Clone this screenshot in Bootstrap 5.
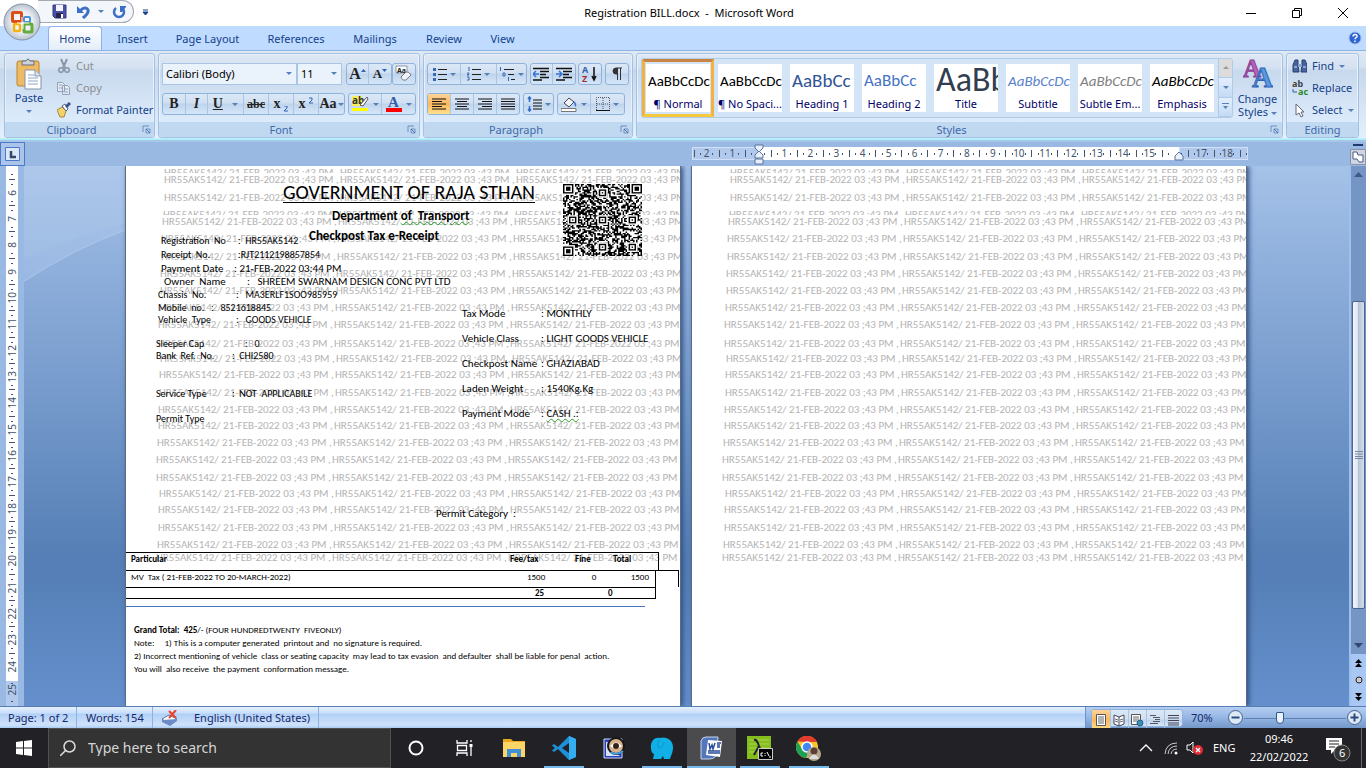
<!DOCTYPE html>
<html lang="en">
<head>
<meta charset="utf-8">
<meta name="viewport" content="width=device-width, initial-scale=1">
<title>Registration BILL.docx - Microsoft Word</title>
<link href="https://cdn.jsdelivr.net/npm/bootstrap@5.3.0/dist/css/bootstrap.min.css" rel="stylesheet">
<script src="https://cdn.jsdelivr.net/npm/bootstrap@5.3.0/dist/js/bootstrap.bundle.min.js"></script>
<style>
body{font:11px/16px "Noto Sans","Open Sans",sans-serif;color:#15428b;background:#bfdbff;overflow:hidden}
button,input,select{font:inherit;color:inherit}
button{background:none;border:0;padding:0}
svg{display:block;flex:none}
a{color:inherit;text-decoration:none}
.titlebar{height:26px;background:#fff;color:#000;position:relative}
.office{position:absolute;left:3px;top:3px;z-index:3}
.qat{margin-left:38px;height:23px;width:96px;border:1px solid #a5a9b0;border-left:0;border-radius:0 12px 12px 0;background:#f3f6fa;padding-left:14px}
.caption{width:46px;height:26px}
.tabs{height:24px;padding-left:48px;background:#bfdbff}
.tabs a{height:24px;padding:5px 0 0;text-align:center}
.tabs .on{background:linear-gradient(#fff,#e4edf8);border:1px solid #8db2e3;border-bottom:0;border-radius:4px 4px 0 0;padding-top:4px}
.ribbon{height:90px;padding:2px 7px 2px 4px;background:linear-gradient(#dfe9f5 0,#d3e1f1 17px,#c7d8ec 18px,#e3effc 87px,#a5f0f7 88px);border-top:1px solid #8db2e3;gap:3px}
.grp{height:85px;border:1px solid #a3c1e2;border-radius:3px;box-shadow:inset 0 0 0 1px #e8f1fb;background:linear-gradient(#dee8f5 0,#d3e0f0 15px,#c8d9ed 16px,#dcebfb 67px);position:relative}
.grp .body{height:68px}
.grp .cap{height:15px;background:#c1d8f1;color:#3e6aaa;text-align:center;line-height:15px;border-radius:0 0 3px 3px;position:relative}
.launch{position:absolute;right:3px;top:3px}
.w-clip{width:151px}.w-font{width:262px}.w-par{width:210px}.w-edit{width:73px}
.caret{display:inline-block;border:3px solid transparent;border-top-color:#5580b8;border-bottom:0;width:0;height:0}
.bset{height:22px;border:1px solid #90b3dc;border-radius:3px;background:linear-gradient(#dbe8f7 0,#d0e0f2 9px,#bfd4ec 10px,#d5e6f8)}
.bset button{height:20px;display:flex;align-items:center;justify-content:center;gap:3px;border-right:1px solid #aac5e4}
.bset button:last-child{border-right:0}
.bset .on{background:linear-gradient(#fdd39a,#f9b85f 50%,#ffe08a)}
.k22{width:22px}.k23{width:23px}.k24{width:24px}.k25{width:25px}.k29{width:29px}.k33{width:33px}.k36{width:36px}
.serif{font-family:"Liberation Serif",serif;color:#222}
.combo{height:22px;border:1px solid #abc4e2;background:#eaf2fb;color:#000;appearance:none;padding:0 3px}
.c-name{width:135px}.c-size{width:45px}
.combo-box{position:relative}.combo-box .caret{position:absolute;right:5px;top:9px;pointer-events:none}
.small-cmd{height:22px;display:flex;align-items:center;gap:5px;white-space:nowrap}
.dim{color:#8d8d8d}
.gallery{height:60px;border:1px solid #b0cbe8;background:#d3e4f7;border-radius:3px;overflow:hidden}
.tile{width:72px;height:58px;padding:4px 3px;border:1px solid transparent;color:#00006c}
.tile>span{display:block;background:#fff;overflow:hidden;white-space:nowrap;width:64px}
.tile .smp{height:32px;line-height:34px;font-size:15px;font-family:Carlito,Lato,sans-serif;text-align:left;padding-left:2px;color:#000}
.tile .nm{height:16px;text-align:center}
.tile.on{border:3px solid #efa43c;border-color:#c98443 #f5b13d #f7c93c;padding:2px 1px}
.tile .hd{font-size:19px;color:#2f5496}.tile .hd2{font-size:17px;color:#4472c4}
.tile .tt{font-size:34px;line-height:32px;color:#323e4f;font-weight:300}
.gscroll{width:14px;border-left:1px solid #b0cbe8}
.gscroll button{flex:1;width:13px;display:flex;align-items:center;justify-content:center;border-bottom:1px solid #b0cbe8;background:linear-gradient(#e3effd,#c4daf4)}
.rulerbar{height:26px;background:#9ab9e2;border-top:2px solid #a9c5ea}
.tabsel{width:25px;height:24px;border:1px solid #4b78ca;background:#abc4e9}
.hruler{height:13px;margin-top:5px;color:#44546a;font-size:10px;width:556px;margin-right:1px}
.rl-out{background:#b0c9ed;box-shadow:inset 0 0 0 1px #cfe0f8;flex:none;overflow:hidden}
.rl-in{background:#fff;flex:1 1 0;min-width:0;padding-left:3px}
.unit{flex:1 1 0;min-width:0;display:grid;grid-template-columns:repeat(4,minmax(0,1fr));align-items:center;justify-items:center;line-height:13px}
.rl-out .unit{flex:none;width:26px}
.rl-out .unit.short{width:18px;grid-template-columns:repeat(3,minmax(0,1fr))}
.unit i{background:#44546a;width:1px;height:2px}.unit i.bar{height:7px}
.unit b{font-weight:400;justify-self:center}
.edge-l{width:67px}.edge-r{width:69px}
.work{min-height:0;background:linear-gradient(#a5c2e8 0,#91b1dd 90px,#7398ca 240px,#557fb6 390px,#557fb6 410px,#6590cd 540px)}
.vruler{width:24px;background:#9ab9e2;padding-left:6px}
.vscale{width:12px;background:#fff;color:#44546a;font-size:10px;overflow:hidden;height:515px;padding-top:6px}
.vend{background:#b0c9ed;width:12px;color:#44546a;height:25px;font-size:10px}
.vunit{height:26px;display:grid;grid-template-rows:4px 5px 5px 12px;justify-items:center;align-items:center}
.vunit.long{height:27px;grid-template-rows:5px 5px 5px 12px}
.vunit i{background:#44546a;height:1px;width:2px}.vunit i.bar{width:6px}
.vunit b{font-weight:400;writing-mode:vertical-rl;transform:rotate(180deg);line-height:12px}
.desk{padding-right:1px;gap:10px;position:relative;overflow:hidden}
.swoosh{position:absolute;left:0;top:0}
.paper{width:556px;background:#fff;border:solid #5b6b85;border-width:0 1px;display:grid;grid-template:minmax(0,1fr)/minmax(0,1fr);box-shadow:2px 0 5px #2f5184;position:relative;overflow:hidden}
.layer{grid-area:1/1;min-width:0;font-family:Carlito,Lato,sans-serif;color:#000}
.wm{color:#b4b4b4;font-size:11px;overflow:hidden}
.wm .ln{display:flex;overflow:hidden;line-height:14px;white-space:nowrap}
.wm .ln span{flex:0 0 176px}
.head{padding:13px 0 0 157px;line-height:20px}
.head h1{font-size:20px;line-height:27px;text-decoration:underline;text-underline-offset:3px;text-decoration-thickness:1px;font-weight:400;margin:0;white-space:nowrap}
.head h2{font-size:13px;line-height:20px;margin:0;font-weight:700}
.wavy{text-decoration:underline wavy #2a9a2a 1px}
.flds{white-space:pre}
.flds .fl{display:flex}
.s9{font-size:10px}.s10{font-size:11px}
.left-f{padding:68px 0 0}.right-f{padding:135px 0 0 336px;font-size:11px;line-height:25px}
.right-f .lb{width:79px}
.qrbox{justify-self:end;padding:18px 38px 0 0}
.bill{padding-top:386px;font-size:9px;line-height:12px}
.bill table{width:553px;table-layout:fixed;border-spacing:0;border-collapse:separate}
.bill td,.bill th{padding:0;vertical-align:top}
.tl{border-top:1px solid #000}.rl{border-right:1px solid #000}.bl{border-bottom:1px solid #000}
.r1{height:18px}.r2{height:17px}.r3{height:12px;line-height:10px}
.blue{height:1px;width:519px;background:#4472c4;margin-top:7px}
.notes{padding:16px 0 0 8px;line-height:13px;white-space:pre}
.scr{width:17px;background:#7596c5;border-left:2px solid #9ec0ec}
.scr button{display:flex;align-items:center;justify-content:center}
.thumb{height:308px;margin:0 1px;border:1px solid #4f6294;border-radius:2px;background:linear-gradient(90deg,#f3f6f9,#dfe7ef 40%,#b4c4d8 50%,#d5dfec);display:flex;align-items:center;justify-content:center}
.status{height:22px;border-top:1px solid #567db1;background:linear-gradient(#e5f0fd 0,#c9dffa 6px,#b1d0f6 7px,#cfe2fb 18px,#a9cbf2);color:#15286b}
.status .it{border-right:1px solid #8eb2e0;display:flex;align-items:center;height:21px;white-space:nowrap}
.zone{background:linear-gradient(#b5cef2,#8fb1e0 60%,#7397c9);border-left:1px solid #6d93c8;width:281px}
.zoomr{appearance:none;width:102px;height:16px;background:linear-gradient(#5f81b4,#5f81b4) 0 8px/100% 1px no-repeat;margin:0}
.zoomr::-webkit-slider-thumb{appearance:none;width:8px;height:12px;background:#e9f1fb;border:1px solid #31578d;border-radius:1px 1px 4px 4px}
.task{height:40px;background:#212126;color:#fff}
.search{width:343px;height:40px;background:#333;border:1px solid #515151;color:#d6d6d6;font-size:14px;padding-left:11px;gap:12px}
.search input{background:none;border:0;outline:0;padding:0;width:220px}
.search input::placeholder{color:#d6d6d6;opacity:1}
.app{width:49px;height:40px;display:flex;align-items:center;justify-content:center}
.run{box-shadow:inset 0 -2px #76b9ed;width:40px;margin:0 5px 0 4px}
.app.act{background:#4b4b4d;box-shadow:inset 0 -2px #76b9ed}
</style>
</head>
<body class="vh-100 d-flex flex-column">
<header class="titlebar d-flex">
 <button class="office" aria-label="Office Button"><svg width="40" height="40"><defs><radialGradient id="og"><stop offset="0" stop-color="#fff"/><stop offset=".6" stop-color="#e9edf2"/><stop offset="1" stop-color="#b9c2cf"/></radialGradient></defs><circle cx="19" cy="19" r="18" fill="url(#og)" stroke="#8392a8"/><g fill="none" stroke-width="3"><rect x="9.500" y="9.500" width="9" height="9" rx="1" stroke="#dd4d15"/><rect x="21" y="14" width="6" height="5" rx="1" stroke="#4c93d8" stroke-width="2"/><rect x="11" y="21" width="6" height="7" rx="1" stroke="#f4b212" stroke-width="2.500"/><rect x="21" y="21" width="8" height="8" rx="1" stroke="#62ab3c"/></g><path d="M14 20h5v-6M20 20v6M19 20h7" stroke="#fff" fill="none"/></svg></button>
 <div class="qat d-flex align-items-center gap-2">
  <button aria-label="Save"><svg width="16" height="16"><path d="M1 1h13v13H3l-2-2z" fill="#4b4fa6" stroke="#373a80"/><path d="M4 1h7v6H4z" fill="#f4f4ff"/><path d="M4 9h7v5H4z" fill="#25264e"/><path d="M9 10h2v4H9z" fill="#fff"/></svg></button>
  <button class="d-flex align-items-center gap-2" aria-label="Undo"><svg width="14" height="14"><path d="M1 1v7h7z" fill="#3b6fc9"/><path d="M4 6c4-5 9-3 8 1-1 3-3 4-5 6" fill="none" stroke="#3b6fc9" stroke-width="3"/></svg><i class="caret"></i></button>
  <button aria-label="Redo"><svg width="14" height="14"><path d="M4 3a5 5 0 1 0 6 0" fill="none" stroke="#3b6fc9" stroke-width="2.500"/><path d="M8 1h6v1l-4 5H8z" fill="#3b6fc9"/></svg></button>
 </div>
 <button class="ms-1 ps-1" aria-label="Customize"><svg width="8" height="8"><path d="M1 1h5M1 3h5l-2.500 3z" stroke="#15428b" fill="#15428b"/></svg></button>
 <div class="flex-fill d-flex justify-content-center align-items-center"><span>Registration BILL.docx&nbsp; -&nbsp; Microsoft Word</span></div>
 <button class="caption d-flex align-items-center justify-content-center" aria-label="Minimize"><svg width="12" height="12"><path d="M1 6.500h10" stroke="#000"/></svg></button>
 <button class="caption d-flex align-items-center justify-content-center" aria-label="Restore"><svg width="12" height="12"><path d="M1.500 3.500h7v7h-7zM3.500 3V1.500h7v7H9" fill="none" stroke="#000"/></svg></button>
 <button class="caption d-flex align-items-center justify-content-center" aria-label="Close"><svg width="12" height="12"><path d="M1 1l10 10M11 1L1 11" stroke="#000"/></svg></button>
</header>
<nav class="tabs d-flex">
 <a href="#" class="on" style="width:54px">Home</a><a href="#" style="width:61px">Insert</a><a href="#" style="width:89px">Page Layout</a><a href="#" style="width:88px">References</a><a href="#" style="width:70px">Mailings</a><a href="#" style="width:68px">Review</a><a href="#" style="width:49px">View</a>
 <button class="ms-auto me-1" aria-label="Help"><svg width="14" height="14"><circle cx="7" cy="7" r="6" fill="#2e65d0" stroke="#9cb8ea"/><path d="M5 5.500c0-3 4.500-2.500 4 0-.3 1-2 1.200-2 2.700M7 9.500V11" stroke="#fff" stroke-width="1.500" fill="none"/></svg></button>
</nav>
<section class="ribbon d-flex">
 <div class="grp w-clip"><div class="body d-flex pt-1">
  <button class="d-flex flex-column align-items-center" style="width:48px"><svg width="28" height="32"><rect x="2" y="3" width="22" height="25" rx="2" fill="#eebb62" stroke="#b98534"/><path d="M7 3h4q2-4 4 0h4v4H7z" fill="#ccd2dc" stroke="#666d7b"/><path d="M10 12h10l6 6v13H10z" fill="#fff" stroke="#8291ad"/><path d="M13 17h6M13 20h10M13 23h10M13 26h10" stroke="#8ea4ca"/><path d="M20 12v6h6" fill="#dde5f2" stroke="#8291ad"/></svg><span>Paste</span><i class="caret mt-1"></i></button>
  <div class="ps-1" style="margin-top:-3px">
   <button class="small-cmd dim"><svg width="14" height="16"><path d="M4 1l4 9M10 1L6 10" stroke="#8a95a8" stroke-width="2"/><circle cx="4" cy="12" r="2.300" fill="none" stroke="#8a95a8" stroke-width="1.500"/><circle cx="10" cy="12" r="2.300" fill="none" stroke="#8a95a8" stroke-width="1.500"/></svg>Cut</button>
   <button class="small-cmd dim"><svg width="14" height="16"><path d="M.5 2.500h5l2 2v7h-7zM5.500 5.500h5l2 2v7h-7z" fill="#e4eaf3" stroke="#94a3bb"/><path d="M7 9h4M7 12h4M2 5h3M2 8h3" stroke="#94a3bb"/></svg>Copy</button>
   <button class="small-cmd"><svg width="14" height="16"><path d="M0 8l5-3 4 4-2 6-4 0z" fill="#f3d26b" stroke="#a8883c"/><path d="M5 4l4 5 2-2-3-5z" fill="#fff" stroke="#50648c"/><path d="M9 5l4-4" stroke="#3d4f8a" stroke-width="3"/></svg>Format Painter</button>
  </div></div><div class="cap pe-3">Clipboard<svg class="launch" width="9" height="9"><path d="M1 7V1h6M4 4h4v4H4z" fill="none" stroke="#6a8fc0"/><path d="M4 4l4 4" stroke="#5075a8"/></svg></div></div>
 <div class="grp w-font"><div class="body d-flex flex-column justify-content-between" style="padding:9px 3px 7px">
  <div class="d-flex">
   <div class="combo-box d-flex"><select class="combo c-name" aria-label="Font"><option>Calibri (Body)</option></select><i class="caret"></i></div>
   <div class="combo-box d-flex"><select class="combo c-size" aria-label="Size"><option>11</option></select><i class="caret"></i></div>
   <div class="bset d-flex serif fw-bold ms-1"><button class="k22 fs-6" style="gap:0" aria-label="Grow Font">A<svg width="5" height="12"><path d="M0 4l2.500-3L5 4z" fill="#2e62b8"/></svg></button><button class="k22" style="font-size:13px;gap:0" aria-label="Shrink Font">A<svg width="5" height="12"><path d="M0 1h5L2.500 4z" fill="#2e62b8"/></svg></button></div>
   <div class="bset d-flex ms-auto"><button class="k22" aria-label="Clear Formatting"><svg width="18" height="18"><path d="M1 1h11v7H1z" fill="#fff" stroke="#8895ac"/><text x="2" y="8" font-size="7" font-weight="bold" fill="#222">Aa</text><path d="M6 12l5-5q3-1 5 3l-5 5q-4 1-5-3z" fill="#f2f2f6" stroke="#70788a"/></svg></button></div>
  </div>
  <div class="d-flex justify-content-between">
   <div class="bset d-flex" style="font:14px 'Liberation Serif',serif;color:#222"><button class="k23 fw-bold">B</button><button class="k22 fst-italic fw-bold">I</button><button class="k36 fw-bold"><u>U</u>&nbsp;<i class="caret"></i></button><button class="k25 fw-bold" style="font-size:12px"><s>abc</s></button><button class="k25 fw-bold" aria-label="Subscript">x<svg class="align-self-end" width="5" height="8"><path d="M0 0h3v2L0 5h4" fill="none" stroke="#2e62b8"/></svg></button><button class="k25 fw-bold" aria-label="Superscript">x<svg class="align-self-start" width="5" height="10"><path d="M0 4h3v2L0 9h4" fill="none" stroke="#2e62b8"/></svg></button><button class="k25 fw-bold" style="gap:1px">Aa<i class="caret"></i></button></div>
   <div class="bset d-flex"><button class="k33" aria-label="Highlight"><svg width="18" height="18"><path d="M0 1h10v10H0z" fill="#f6ee5a"/><text x="0" y="9" font-size="10" font-weight="bold" fill="#333">ab</text><path d="M8 10l7-8 1 2-5 7z" fill="#fff" stroke="#556"/><path d="M0 13h16v3H0z" fill="#ff0"/></svg><i class="caret"></i></button><button class="k33" aria-label="Font Color"><svg width="18" height="18"><text x="3" y="12" font-size="15" font-weight="bold" font-family="Liberation Serif" fill="#2f5fa8">A</text><path d="M1 13h16v4H1z" fill="red"/></svg><i class="caret"></i></button></div>
  </div></div><div class="cap pe-3">Font<svg class="launch" width="9" height="9"><path d="M1 7V1h6M4 4h4v4H4z" fill="none" stroke="#6a8fc0"/><path d="M4 4l4 4" stroke="#5075a8"/></svg></div></div>
 <div class="grp w-par"><div class="body d-flex flex-column justify-content-between" style="padding:9px 3px 7px">
  <div class="d-flex justify-content-between">
   <div class="bset d-flex"><button class="k33" aria-label="Bullets"><svg width="14" height="14"><path d="M5 2.500h9M5 7.500h9M5 12.500h9" stroke="#222"/><path d="M0 1h3v3H0zM0 6h3v3H0zM0 11h3v3H0z" fill="#3867b5"/></svg><i class="caret"></i></button><button class="k36" aria-label="Numbering"><svg width="14" height="14"><path d="M5 2.500h9M5 7.500h9M5 12.500h9" stroke="#222"/><path d="M1 0h1v4M0 6h2v1L0 8h2M0 10h2v3H0" fill="none" stroke="#3867b5"/></svg><i class="caret"></i></button><button class="k29" aria-label="Multilevel List"><svg width="16" height="14"><path d="M5 2.500h10M9 7.500h6M12 12.500h4" stroke="#222"/><path d="M1.500 0v4M4 6h2v3H4zM9.500 10v4" fill="none" stroke="#3867b5"/></svg><i class="caret"></i></button></div>
   <div class="bset d-flex"><button class="k22" aria-label="Decrease Indent"><svg width="16" height="14"><path d="M0 1.500h16M7 4.500h9M7 7.500h6M7 10.500h9M0 13h9" stroke="#111" stroke-width="1.500"/><path d="M6 7H1m2-3L0 7l3 3" stroke="#3473d6" stroke-width="1.500" fill="none"/></svg></button><button class="k22" aria-label="Increase Indent"><svg width="16" height="14"><path d="M0 1.500h16M7 4.500h9M7 7.500h6M7 10.500h9M0 13h9" stroke="#111" stroke-width="1.500"/><path d="M0 7h5M3 4l3 3-3 3" stroke="#3473d6" stroke-width="1.500" fill="none"/></svg></button></div>
   <div class="bset d-flex"><button class="k22" aria-label="Sort"><svg width="16" height="18"><text x="0" y="8" font-size="9" font-weight="bold" fill="#3560a8">A</text><text x="0" y="17" font-size="9" font-weight="bold" fill="#a03030">Z</text><path d="M12 2v12m-2-3l2 4 2-4" stroke="#111" stroke-width="1.500" fill="none"/></svg></button></div>
   <div class="bset d-flex"><button class="k22" aria-label="Show marks"><svg width="12" height="14"><path d="M6.500 1H5a3 3 0 0 0 0 6h1.500z" fill="#333"/><path d="M11 1H5a3 3 0 0 0 0 6h1M6.500 1v12M9.500 1v12" fill="none" stroke="#333"/></svg></button></div>
  </div>
  <div class="d-flex" style="gap:3px">
   <div class="bset d-flex"><button class="k23 on" aria-label="Align Left"><svg width="14" height="12"><path d="M0 1h14M0 3.500h10M0 6h14M0 8.500h10M0 11h14" stroke="#111"/></svg></button><button class="k23" aria-label="Center"><svg width="14" height="12"><path d="M0 1h14M2 3.500h10M0 6h14M2 8.500h10M0 11h14" stroke="#111"/></svg></button><button class="k23" aria-label="Align Right"><svg width="14" height="12"><path d="M0 1h14M4 3.500h10M0 6h14M4 8.500h10M0 11h14" stroke="#111"/></svg></button><button class="k22" aria-label="Justify"><svg width="14" height="12"><path d="M0 1h14M0 3.500h14M0 6h14M0 8.500h14M0 11h14" stroke="#111"/></svg></button></div>
   <div class="bset d-flex"><button class="k29" aria-label="Line Spacing"><svg width="15" height="16"><path d="M6 4h9M6 7h9M6 10h9M6 13h9" stroke="#111"/><path d="M2.500 1v5M1 3l1.500-2L4 3M2.500 10v5M1 13l1.500 2L4 13" stroke="#2e6ad0" stroke-width="1.500" fill="none"/></svg><i class="caret"></i></button></div>
   <div class="bset d-flex"><button class="k33" aria-label="Shading"><svg width="17" height="16"><path d="M3 7l5-5 5 4-5 5z" fill="#eef3fa" stroke="#445"/><path d="M13 5q3 2 2 6-2-1-2-6z" fill="#3a76d6"/><path d="M0 12.500h15v3H0z" fill="#fff" stroke="#777"/></svg><i class="caret"></i></button><button class="k33" aria-label="Borders"><svg width="14" height="14"><path d="M.5 13V.5h13V13M7 1v12M1 7h12" stroke="#556" stroke-dasharray="1 1" fill="none"/><path d="M0 13.500h14" stroke="#111"/></svg><i class="caret"></i></button></div>
  </div></div><div class="cap pe-4">Paragraph<svg class="launch" width="9" height="9"><path d="M1 7V1h6M4 4h4v4H4z" fill="none" stroke="#6a8fc0"/><path d="M4 4l4 4" stroke="#5075a8"/></svg></div></div>
 <div class="grp flex-fill"><div class="body d-flex pt-1 ps-1">
  <div class="gallery d-flex">
   <button class="tile on"><span class="smp">AaBbCcDc</span><span class="nm">¶ Normal</span></button>
   <button class="tile"><span class="smp">AaBbCcDc</span><span class="nm">¶ No Spaci...</span></button>
   <button class="tile"><span class="smp hd">AaBbCc</span><span class="nm">Heading 1</span></button>
   <button class="tile"><span class="smp hd2">AaBbCc</span><span class="nm">Heading 2</span></button>
   <button class="tile"><span class="smp tt">AaBb</span><span class="nm">Title</span></button>
   <button class="tile"><span class="smp fst-italic" style="color:#5a82cc">AaBbCcDc</span><span class="nm">Subtitle</span></button>
   <button class="tile"><span class="smp fst-italic" style="color:#808080">AaBbCcDc</span><span class="nm">Subtle Em...</span></button>
   <button class="tile"><span class="smp fst-italic">AaBbCcDc</span><span class="nm">Emphasis</span></button>
   <div class="gscroll d-flex flex-column"><button style="background:#dcdcdc" aria-label="Up"><svg width="6" height="4"><path d="M0 3l3-3 3 3z" fill="#999"/></svg></button><button aria-label="Down"><i class="caret"></i></button><button class="flex-column gap-1" aria-label="More"><svg width="7" height="7"><path d="M0 .5h7" stroke="#5580b8"/><path d="M1 3h5L3.500 6z" fill="#5580b8"/></svg></button></div>
  </div>
  <button class="flex-fill d-flex flex-column align-items-center" style="line-height:13px"><svg width="30" height="30"><g font-family="Liberation Serif" font-weight="bold" stroke-width="1"><text x="0" y="19" font-size="25" fill="#b862b8" stroke="#8d3f96">A</text><text x="9" y="29" font-size="29" fill="#5d97e0" stroke="#2f64b5">A</text></g></svg><span class="mt-1">Change<br>Styles <i class="caret align-middle"></i></span></button>
 </div><div class="cap pe-3">Styles<svg class="launch" width="9" height="9"><path d="M1 7V1h6M4 4h4v4H4z" fill="none" stroke="#6a8fc0"/><path d="M4 4l4 4" stroke="#5075a8"/></svg></div></div>
 <div class="grp w-edit"><div class="body" style="padding:1px 0 0 5px">
  <button class="small-cmd"><svg width="15" height="14"><path d="M3 1h3v4l1 8H1V6zM10 1h3l2 5v7H9l1-8z" fill="#47659c" stroke="#273f70"/><path d="M6 5h4v3H6z" fill="#8ba4cf"/><path d="M2 8h3M11 8h3" stroke="#dbe5f5"/></svg>Find <i class="caret"></i></button>
  <button class="small-cmd" style="gap:4px"><svg width="16" height="16"><text x="0" y="7" font-size="9" font-weight="bold" fill="#444">ab</text><text x="6" y="15" font-size="9" font-weight="bold" fill="#2a8a2a">ac</text><path d="M1 9v3h4" fill="none" stroke="#2f5fa8"/></svg>Replace</button>
  <button class="small-cmd"><svg width="15" height="15"><path d="M4 1v11l3-2 2 4 2-1-2-4h3z" fill="#fff" stroke="#667"/></svg>Select <i class="caret"></i></button>
 </div><div class="cap">Editing</div></div>
</section>
<div class="rulerbar d-flex">
 <button class="tabsel d-flex align-items-center justify-content-center" aria-label="Tab selector"><svg width="15" height="14"><path d="M.5.500h14v13H.5z" fill="#dbe7f6" stroke="#4b78ca"/><path d="M6 4v6h5" fill="none" stroke="#33466b" stroke-width="2.500"/></svg></button>
 <div class="flex-fill d-flex justify-content-center"><div class="d-flex" style="gap:10px"><div style="width:556px"></div><div class="hruler d-flex position-relative">
  <div class="rl-out edge-l d-flex" id="rA"></div><div class="rl-in d-flex" id="rB"></div><div class="rl-out edge-r d-flex" id="rC"></div>
  <svg class="position-absolute" style="left:62px;top:-3px" width="10" height="22"><path d="M1 1h8v3L5 8 1 4zM1 14v-3l4-4 4 4v3zM1 15h8v5H1z" fill="#e8eff9" stroke="#5873a0"/></svg>
  <svg class="position-absolute" style="right:64px;top:4px" width="10" height="10"><path d="M1 9V5l4-4 4 4v4z" fill="#e8eff9" stroke="#5873a0"/></svg>
 </div></div></div>
 <button class="d-flex flex-column align-items-center" style="width:17px" aria-label="View Ruler"><svg width="16" height="24"><path d="M3 3h10" stroke="#1f3a6b" stroke-width="2"/><path d="M.5 7.500h15v15H.5z" fill="#cfd6e2" stroke="#8793aa"/><path d="M3 10h4l1 3h5v7H9l-2-3H3z" fill="#fff" stroke="#445a85"/></svg></button>
</div>
<main class="work d-flex flex-fill">
 <div class="vruler"><div class="vscale" id="rV"></div><div class="vend" id="rW"></div></div>
 <div class="desk d-flex flex-fill justify-content-center">
  <svg class="swoosh" width="101" height="130"><path d="M0 93Q50 72 101 57v8Q50 83 0 116z" fill="#b4cdf0" opacity=".35"/><path d="M0 0h101v57Q50 72 0 93z" fill="#bcd3f2" opacity=".35"/><path d="M0 115Q50 83 101 64" stroke="#b5cdef" opacity=".6" fill="none"/></svg>
  <article class="paper">
   <div class="layer wm" data-wm></div>
   <div class="layer head"><h1>GOVERNMENT OF RAJA STHAN</h1><h2 style="padding-left:49px">Department <span class="wavy">of&nbsp; Transport</span></h2><h2 style="padding-left:26px">Checkpost Tax e-Receipt</h2></div>
   <div class="layer left-f flds" id="fl"></div>
   <div class="layer right-f flds" id="fr"></div>
   <div class="layer qrbox"><svg id="qr" width="79" height="72" viewBox="0 0 53 53" preserveAspectRatio="none" role="img" aria-label="QR code"></svg></div>
   <div class="layer bill">
    <table><colgroup><col><col style="width:60px"><col style="width:44px"><col style="width:52px"><col style="width:3px"><col style="width:20px"></colgroup>
     <tr class="r1"><th class="tl" style="padding-left:5px">Particular</th><th class="tl" style="padding-left:10px">Fee/tax</th><th class="tl" style="padding-left:15px">Fine</th><th class="tl" style="padding-left:9px">Total</th><th class="tl rl"></th><th></th></tr>
     <tr class="r2"><td class="tl" style="padding-left:5px">MV&nbsp; Tax ( 21-FEB-2022 TO 20-MARCH-2022)</td><td class="tl" style="padding-left:27px">1500</td><td class="tl text-center ps-4">0</td><td class="tl rl text-end" style="padding-right:6px">1500</td><td class="tl"></td><td class="tl rl"></td></tr>
     <tr class="r3 fw-bold"><td class="tl bl"></td><td class="tl bl" style="padding-left:35px">25</td><td class="tl bl"></td><td class="tl rl bl" style="padding-left:4px">0</td><td></td><td></td></tr></table>
    <div class="blue"></div>
    <div class="notes"><b>Grand Total:  425</b>/- (FOUR HUNDREDTWENTY  FIVEONLY)
Note:     1) This is a computer generated  printout and  no signature is required.
2) Incorrect mentioning of vehicle  class or seating capacity  may lead to tax evasion  and defaulter  shall be liable for penal  action.
You will  also receive  the payment  conformation message.</div>
   </div>
  </article>
  <article class="paper"><div class="layer wm" data-wm></div></article>
 </div>
 <div class="scr d-flex flex-column"><button style="height:17px" aria-label="Scroll up"><svg width="9" height="5"><path d="M0 5l4.500-5L9 5z" fill="#3f5a8a"/></svg></button><div style="height:118px"></div><div class="thumb"><svg width="8" height="8"><path d="M0 .5h8M0 3h8M0 5.500h8M0 7.500h8" stroke="#7b88a3"/></svg></div><div class="flex-fill"></div><button style="height:17px" aria-label="Scroll down"><svg width="9" height="5"><path d="M0 0h9L4.500 5z" fill="#33486f"/></svg></button>
 <div class="d-flex flex-column justify-content-around" style="background:#a9c7f3;height:52px"><button aria-label="Previous Page"><svg width="7" height="8"><path d="M0 4l3.500-4L7 4zM0 8l3.500-4L7 8z"/></svg></button><button aria-label="Browse"><svg width="8" height="8"><circle cx="4" cy="4" r="3" fill="#ccc" stroke="#222"/></svg></button><button aria-label="Next Page"><svg width="7" height="8"><path d="M0 0h7L3.500 4zM0 4h7L3.500 8z"/></svg></button></div></div>
</main>
<footer class="status d-flex">
 <span class="it" style="width:77px;padding-left:8px">Page: 1 of 2</span><span class="it" style="width:76px;padding-left:9px">Words: 154</span>
 <span class="it" style="width:166px;padding-left:8px;gap:16px"><svg width="17" height="16"><path d="M1 9l7-4 8 4-7 6z" fill="#fff" stroke="#5573a8"/><path d="M1 10v2l8 4 7-5V9" fill="#6c8cc6"/><path d="M8 1l7 7M15 0L8 8" stroke="#e8452c" stroke-width="2"/></svg>English (United States)</span>
 <div class="zone ms-auto d-flex align-items-center" style="padding-left:5px">
  <div class="bset d-flex" style="height:18px"><button class="on" aria-label="Print Layout"><svg width="18" height="14"><path d="M4.500 1.500h9v11h-9z" fill="#fff" stroke="#555"/><path d="M6 4h6M6 6h6M6 8h6M6 10h6" stroke="#666"/></svg></button><button aria-label="Reading"><svg width="17" height="14"><path d="M3 2l5 2 5-2v9l-5 2-5-2zM8 4v9" fill="#fff" stroke="#445"/><path d="M4 6l3 1M4 8l3 1M9 7l3-1M9 9l3-1" stroke="#667"/></svg></button><button aria-label="Web"><svg width="17" height="14"><path d="M2.500 1.500h9v10h-9z" fill="#fff" stroke="#555"/><path d="M4 4h6M4 6h6M4 8h4" stroke="#666"/><circle cx="11" cy="10" r="3" fill="#3a8fb0" stroke="#27618a"/></svg></button><button aria-label="Outline"><svg width="17" height="14"><path d="M3 2.500h6M6 4.500h7M8 6.500h5M6 8.500h7M3 10.500h8" stroke="#556"/></svg></button><button aria-label="Draft"><svg width="17" height="14"><path d="M3 2.500h11M3 5h11M3 7.500h11M3 10h11M3 12h11" stroke="#445"/></svg></button></div>
  <span style="width:44px;padding-left:8px">70%</span>
  <button aria-label="Zoom out"><svg width="17" height="17"><circle cx="8.500" cy="8.500" r="7" fill="#dde8f7" stroke="#41618f"/><path d="M4.500 8.500h8" stroke="#2b4a7d" stroke-width="2"/></svg></button><input class="zoomr" type="range" min="0" max="100" value="34" aria-label="Zoom"><button aria-label="Zoom in"><svg width="17" height="17"><circle cx="8.500" cy="8.500" r="7" fill="#dde8f7" stroke="#41618f"/><path d="M4.500 8.500h8M8.500 4.500v8" stroke="#2b4a7d" stroke-width="2"/></svg></button>
 </div>
</footer>
<nav class="task d-flex">
 <button class="app" style="width:48px" aria-label="Start"><svg width="16" height="16"><path d="M0 2l7-1v6.500H0zM8 1l8-1v7.500H8zM0 8.500h7V15l-7-1zM8 8.500h8V16l-8-1z" fill="#fff"/></svg></button>
 <label class="search d-flex align-items-center"><svg width="16" height="16"><circle cx="9.500" cy="6.500" r="5.500" fill="none" stroke="#ddd" stroke-width="1.500"/><path d="M5.500 10.500L0 16" stroke="#ddd" stroke-width="1.500"/></svg><input type="text" placeholder="Type here to search" aria-label="Search"></label>
 <button class="app" aria-label="Cortana"><svg width="16" height="16"><circle cx="8" cy="8" r="6.500" fill="none" stroke="#fff" stroke-width="2"/></svg></button>
 <button class="app" style="width:48px" aria-label="Task View"><svg width="17" height="16"><path d="M1 0v3h10V0M1 16v-3h10v3M1.500 5.500h9v5h-9zM15 0v2M15 7v9" fill="none" stroke="#fff" stroke-width="1.300"/><path d="M13.500 4h3v3h-3z" fill="#fff"/></svg></button>
 <button class="app" style="width:52px" aria-label="File Explorer"><svg width="22" height="18"><path d="M0 0h8l2 2h12v16H0z" fill="#e9a820"/><path d="M0 3h22v15H0z" fill="#fbd667"/><path d="M4 18v-8h14v8h-4v-4H8v4z" fill="#3f8fd9"/></svg></button>
 <button class="app run" aria-label="Visual Studio Code"><svg width="24" height="24"><path d="M17 0l7 3v18l-7 3L6 13l-4 3-2-1.500L3 12 0 9.500 2 8l4 3zM17 7l-7 5 7 5z" fill="#1e90d8" fill-rule="evenodd"/><path d="M17 0l7 3v18l-7 3z" fill="#34adf1"/></svg></button>
 <button class="app" aria-label="Viewer"><svg width="24" height="24"><path d="M2 3h18v19H2z" fill="#2b3fb8" stroke="#cfd8ff"/><path d="M4 6h5v7q4 5 9 7H4z" fill="#d7e3f4"/><circle cx="14" cy="10" r="8" fill="#d9b08b" stroke="#151515" stroke-width="2"/><path d="M8 10q6-7 12 0-6 5-12 0z" fill="#fff"/><circle cx="14" cy="10" r="3" fill="#332219"/><path d="M9 16q5 4 12-1" stroke="#3ea0e0" stroke-width="2" fill="none"/></svg></button>
 <button class="app run" aria-label="Mongoose"><svg width="24" height="24"><path d="M1 12C0 4 6 1 10 2c6-2 13 2 13 9 0 6-2 8-3 12h-6l-1-3-2 3H3l1-5q-3-1-3-6z" fill="#10b0e6"/><path d="M9 4q-3 5 0 8 4 0 5-6" fill="none" stroke="#0b97c9"/></svg></button>
 <button class="app act" aria-label="Word"><svg width="24" height="24"><path d="M1 5q1-4 5-4h12l-1 16q-1 6-8 6H1z" fill="#5377bd" stroke="#c7d5f0"/><path d="M8 4l14 1-2 16-14-2z" fill="#fff"/><path d="M9 7l1 6 2-4 1 4 2-6M17 7h4M17 9h3M17 11h3M8 15h12M8 17h12" fill="none" stroke="#2b4c9c" stroke-width="1.500"/></svg></button>
 <button class="app run" aria-label="Cmder"><svg width="26" height="24"><path d="M0 0h24v23H0z" fill="#84bd1d"/><path d="M2 4h20M2 8h20M2 12h20M2 16h20" stroke="#a7d84f"/><path d="M7 4q3-1 5 6l2 5M12 10l-5 9" stroke="#223" stroke-width="2" fill="none"/><path d="M11.500 12.500h14v11h-14z" fill="#000" stroke="#ccc"/><path d="M16 17h-2v3h2M18 17v1M18 19v1M20 16l2 4M22 21h2" stroke="#fff" fill="none"/></svg></button>
 <button class="app run" aria-label="Chrome"><svg width="26" height="25"><circle cx="11" cy="11" r="11" fill="#f7c52d"/><path d="M1.500 5.500A11 11 0 0 1 21 6H11z" fill="#e33b2e"/><path d="M1.500 5.500A11 11 0 0 0 10 22l5-9-9 0z" fill="#1da255"/><circle cx="11" cy="11" r="5" fill="#4285f4" stroke="#fff" stroke-width="1.500"/><circle cx="18" cy="18" r="7" fill="#b5a88d"/><circle cx="18" cy="15" r="3.500" fill="#5d4033"/><path d="M13 23q5-9 10 0z" fill="#ddd"/></svg></button>
 <div class="ms-auto d-flex align-items-center">
  <svg width="14" height="8"><path d="M1 7l6-6 6 6" fill="none" stroke="#fff" stroke-width="1.300"/></svg>
  <svg style="margin-left:11px" width="16" height="14"><path d="M1 13Q2 2 13 2M4 13Q5 5 13 5M7 13Q8 8 13 8" fill="none" stroke="#ccc"/><circle cx="12" cy="12" r="1.500" fill="#fff"/></svg>
  <svg style="margin:0 9px 0 6px" width="18" height="16"><path d="M1 5h3l3-3v11l-3-3H1z" fill="none" stroke="#fff"/><circle cx="12" cy="10" r="5" fill="#e02b35"/><path d="M10 8l4 4M14 8l-4 4" stroke="#fff" stroke-width="1.300"/></svg>
  <span style="width:36px">ENG</span>
  <span class="text-center" style="width:60px;line-height:18px">09:46<br>22/02/2022</span>
  <svg style="margin:4px 9px 0 17px" width="26" height="28"><path d="M0 2h16v12H9l-4 4v-4H0z" fill="#fff"/><path d="M3 5h10M3 8h10M3 11h6" stroke="#222"/><circle cx="16" cy="17" r="8" fill="#333" stroke="#888"/><text x="13" y="21" font-size="11" fill="#fff">6</text></svg>
  <div style="width:5px;height:40px;border-left:1px solid #666"></div>
 </div>
</nav>
<script>
const $=id=>document.getElementById(id);
// rulers: two dots, a bar and a number for each centimetre
const unit=n=>`<div class="unit"><i></i><i class="bar"></i><i></i><b>${n}</b></div>`;
$('rA').innerHTML='<div class="unit short"><i class="bar"></i><i></i><b>2</b></div>'+unit(1)+unit('');
for(let i=1;i<=16;i++)$('rB').innerHTML+=unit(i<16?i:'');
$('rC').innerHTML='<div style="width:5px"></div>'+unit(17)+unit(18)+unit('');
const vu=n=>`<div class="vunit${n%3?'':' long'}"><i></i><i class="bar"></i><i></i><b>${n}</b></div>`;
for(let n=6;n<=24;n++)$('rV').innerHTML+=vu(n);
$('rW').innerHTML='<div class="vunit"><i></i><b style="grid-row:2/4">25</b><i></i></div>';
// background security text: [row height, indent]
const rows=[[7,38],[18,38],[17,38],[7,37],[17,36],[18,35],[17,35],[17,34],[17,34],[17,33],[19,32],[15,32],[16,34],[18,33],[17,33],[16,32],[17,32],[17,31],[18,30],[16,30],[16,33],[18,32],[17,32],[13,31],[11,30]];
document.querySelectorAll('[data-wm]').forEach(l=>{
 l.innerHTML=rows.map(([h,x])=>`<div class="ln" style="height:${h}px;padding-left:${x}px">`+'<span>HR55AK5142/ 21-FEB-2022 03 ;43 PM ,</span>'.repeat(3)+'</div>').join('');
});
// receipt fields: [row height, indent, label, label width, value, size]
const L=[[14,35,'Registration  No',77,':  HR55AK5142','s9'],[14,35,'Receipt  No.',77,':RJT2112198857854','s9'],[13,35,'Payment Date',73,': 21-FEB-2022 03:44 PM','s10'],[13,38,'Owner  Name',83,':   SHREEM SWARNAM DESIGN CONC PVT LTD','s10'],[13,32,'Chassis  No.',78,':   MA3ERLF1SOO985959','s9'],[12,32,'Mobile  no.',53,':   8521618845','s9'],[24,32,'Vehicle  Type',78,':   GOODS VEHICLE','s9'],[12,30,'Sleeper Cap',89,':   0','s9'],[38,30,'Bank  Ref.  No.',76,':  CHI2580','s9'],[25,30,'Service Type',76,':  NOT  APPLICABILE','s9'],[20,30,'Permit Type',76,'','s9']];
$('fl').innerHTML=L.map(([h,x,a,w,b,s])=>`<div class="fl ${s}" style="height:${h}px;padding-left:${x}px;line-height:14px"><span style="width:${w}px">${a}</span><span>${b}</span></div>`).join('');
$('fr').innerHTML=[['Tax Mode',': MONTHLY'],['Vehicle Class',': LIGHT GOODS VEHICLE'],['Checkpost Name',': GHAZIABAD'],['Laden Weight',': 1540Kg.Kg'],['Payment Mode',': <span class="wavy">CASH .:</span>']].map(r=>`<div class="fl"><span class="lb">${r[0]}</span><span>${r[1]}</span></div>`).join('')+'<div style="margin:75px 0 0 -26px">Permit Category  :</div>';
// QR pattern
let seed=11,s='';const rnd=()=>(seed=seed*16807%2147483647)/2147483647,N=53;
s=`<path fill="#fff" d="M0 0h${N}v${N}H0z"/><path d="`;
for(let y=0;y<N;y++)for(let x=0;x<N;x++)if(rnd()<.55)s+=`M${x} ${y}h1v1h-1z`;
s+='"/>';
const sq=(x,y,n)=>{s+=`<path fill="#fff" d="M${x-1} ${y-1}h${n+2}v${n+2}h-${n+2}z"/><path d="M${x} ${y}h${n}v${n}h-${n}z"/><path fill="#fff" d="M${x+1} ${y+1}h${n-2}v${n-2}h-${n-2}z"/><path d="M${x+2} ${y+2}h${n-4}v${n-4}h-${n-4}z"/>`};
sq(0,0,7);sq(46,0,7);sq(0,46,7);sq(24,24,5);sq(24,44,5);sq(44,44,5);sq(4,24,5);sq(44,24,5);sq(24,4,5);
$('qr').innerHTML=s;
</script>
</body>
</html>
